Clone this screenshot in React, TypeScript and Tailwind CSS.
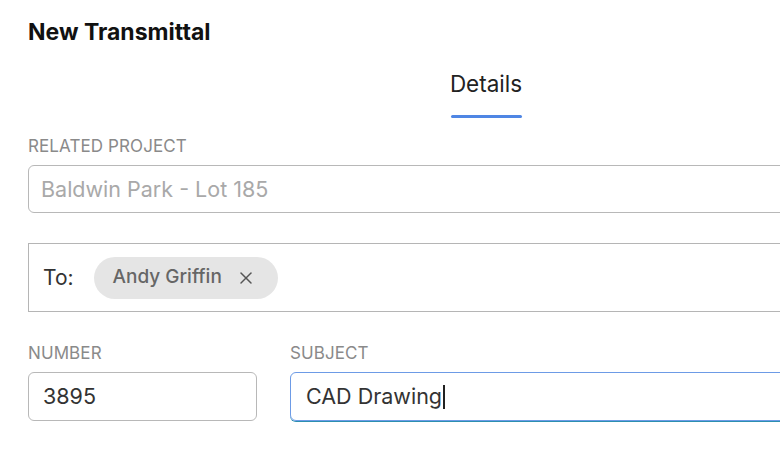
import { X } from "lucide-react";

const font = { fontFamily: "Inter, 'Liberation Sans', sans-serif" };

function Label({ children }: { children: React.ReactNode }) {
  return (
    <div className="text-[17px] leading-[20px] tracking-[0.1px] text-[#8a8a8a] uppercase mb-[9px]">
      {children}
    </div>
  );
}

export default function App() {
  return (
    <div className="w-[780px] h-[456px] overflow-hidden bg-white" style={font}>
      <div className="w-[972px] px-[28px]">
        <h1 className="pt-[18px] text-[23px] leading-[28px] font-bold text-[#111]">New Transmittal</h1>

        <div className="flex justify-center mt-[25px]">
          <div className="flex flex-col items-center">
            <span className="text-[22.5px] leading-[26px] text-[#222]">Details</span>
            <span className="mt-[18px] h-[3px] w-[71px] rounded-sm bg-[#4f86e4]" />
          </div>
        </div>

        <div className="mt-[18px]">
          <Label>Related Project</Label>
          <div className="h-[48px] rounded-[6px] border border-[#b8b8b8] flex items-center px-[12px] text-[21.5px] text-[#a9a9a9]">
            Baldwin Park - Lot 185
          </div>
        </div>

        <div className="mt-[30px] h-[69px] border border-[#b5b5b5] flex items-center pl-[14px]">
          <span className="text-[21px] text-[#333]">To:</span>
          <span className="ml-[20px] h-[42px] rounded-full bg-[#e5e5e5] flex items-center pl-[19px] pr-[22px] text-[19px] font-medium text-[#666]">
            Andy Griffin
            <X size={20} strokeWidth={1.8} className="ml-[14px] text-[#555]" />
          </span>
        </div>

        <div className="mt-[31px] flex gap-[33px]">
          <div className="w-[229px]">
            <Label>Number</Label>
            <div className="h-[49px] rounded-[6px] border border-[#b8b8b8] flex items-center px-[14px] text-[21.5px] text-[#333]">
              3895
            </div>
          </div>
          <div className="flex-1">
            <Label>Subject</Label>
            <div className="h-[49px] rounded-[6px] border border-[#6d9be6] shadow-[0_1px_0_#2c8fb0] flex items-center px-[15px] text-[21.5px] text-[#333]">
              CAD Drawing
              <span className="ml-[1px] h-[24px] w-[1.5px] bg-[#222]" />
            </div>
          </div>
        </div>

        <div className="mt-[32px]">
          <Label>CC</Label>
        </div>
      </div>
    </div>
  );
}
